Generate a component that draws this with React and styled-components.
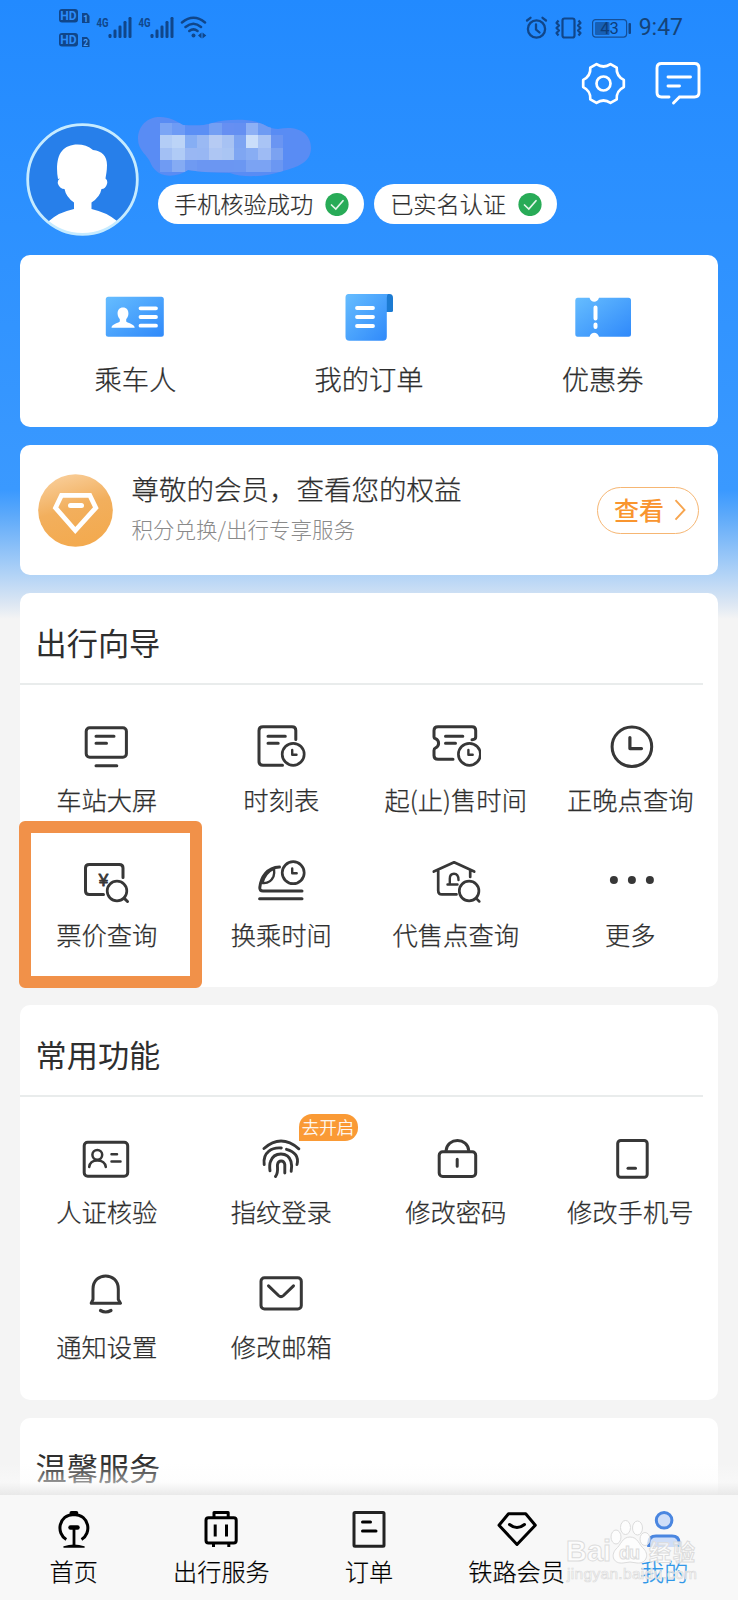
import styled, { createGlobalStyle, css } from "styled-components";

const GlobalStyle = createGlobalStyle`
    *, *::after {
        box-sizing: border-box;
    }
    body {
        margin: 0;
        background-color: #f4f4f4;
        font-family: "Noto Sans CJK SC", "Noto Sans", sans-serif;
        color: #2e2e2e;
    }
    svg {
        display: block;
        flex-shrink: 0;
    }
`

const Page = styled.div`
    display: flex;
    flex-direction: column;
    width: 738px;
    height: 1600px;
    overflow: hidden;
    background: linear-gradient(#228aff 0, #3a99ff 490px, #5ca9fa 515px, #b4d4f6 576px, #dbe6f3 603px, #f4f4f4 619px);
`

const Content = styled.main`
    position: relative;
    display: flex;
    flex-direction: column;
    height: 1495px;
    overflow: hidden;
`

const BottomFade = styled.div`
    position: absolute;
    left: 0;
    right: 0;
    bottom: 0;
    height: 32px;
    background: linear-gradient(rgba(255, 255, 255, 0), rgba(251, 251, 251, 0.5) 60%, rgba(232, 232, 232, 0.95));
`

const StatusBar = styled.div`
    display: flex;
    flex-shrink: 0;
    justify-content: space-between;
    align-items: center;
    height: 55px;
    padding: 0 55px 0 58px;
    color: #10468a;
`

const StatusGroup = styled.div`
    display: flex;
    align-items: center;
    height: 100%;
`

const Clock = styled.span`
    margin-left: 7px;
    font: 400 23px/30px Roboto, sans-serif;
    color: #154377;
`

const Toolbar = styled.div`
    display: flex;
    flex-shrink: 0;
    justify-content: flex-end;
    gap: 28px;
    height: 62px;
    padding: 6px 37px 0 0;
`

const Profile = styled.section`
    display: flex;
    flex-shrink: 0;
    height: 138px;
    padding-left: 26px;
`

const Avatar = styled.svg`
    margin-top: 6px;
`

const ProfileInfo = styled.div`
    margin-left: -1px;
`

const Pills = styled.div`
    display: flex;
    gap: 10px;
    margin: 7px 0 0 20px;
`

const Pill = styled.span`
    display: flex;
    align-items: center;
    gap: 12px;
    height: 40px;
    padding: 0 15px 0 16px;
    border-radius: 20px;
    background-color: #fff;
    font-size: 23.2px;
    font-weight: 300;
    line-height: 40px;
    white-space: nowrap;
    -webkit-text-stroke: 0.2px currentColor;
`

const PillText = styled.span`
    margin-top: -2px;
`

const Cards = styled.div`
    display: flex;
    flex-direction: column;
    gap: 18px;
    padding: 0 20px;
`

const Card = styled.section`
    flex-shrink: 0;
    height: ${props => props.$height}px;
    border-radius: 10px;
    background-color: #fff;
`

const Shortcuts = styled.div`
    display: grid;
    grid-template-columns: repeat(3, 1fr);
    margin: 0 -1.5px;
    padding-top: 37px;
`

const Shortcut = styled.div`
    display: flex;
    flex-direction: column;
    align-items: center;
    gap: 18px;
    font-size: 27.3px;
    font-weight: 300;
    line-height: 36px;
    -webkit-text-stroke: 0.25px currentColor;
`

const Member = styled.div`
    display: flex;
    align-items: center;
    height: 100%;
    padding: 0 19px 0 18px;
`

const MemberText = styled.div`
    flex: 1;
    margin: -4px 0 0 18.5px;
    white-space: nowrap;
`

const MemberTitle = styled.div`
    font-size: 27.5px;
    font-weight: 300;
    line-height: 40px;
    -webkit-text-stroke: 0.25px currentColor;
`

const MemberNote = styled.div`
    font-size: 21.5px;
    font-weight: 300;
    line-height: 41px;
    color: #8a8a8a;
`

const ViewButton = styled.button`
    display: flex;
    align-items: center;
    gap: 10px;
    width: 102px;
    height: 47px;
    padding: 0 0 2px 16px;
    border: 1.5px solid #f6b673;
    border-radius: 24px;
    background: none;
    font: 500 25px/40px "Noto Sans CJK SC", sans-serif;
    color: #f9952f;
    white-space: nowrap;
`

const SectionTitle = styled.h2`
    height: 92px;
    margin: 0 15px 0 0;
    padding: 5px 0 0 15.5px;
    border-bottom: 2px solid #e9ecec;
    font-size: 31.2px;
    font-weight: 400;
    line-height: 88px;
`

const Tiles = styled.div`
    display: grid;
    grid-template-columns: repeat(4, 1fr);
    grid-auto-rows: 135px;
`

const Tile = styled.div`
    position: relative;
    display: flex;
    flex-direction: column;
    align-items: center;
    gap: 12px;
    padding-top: 36px;
    font-size: 25.3px;
    font-weight: 300;
    line-height: 32px;
    white-space: nowrap;
    -webkit-text-stroke: 0.25px currentColor;
    ${props => props.$marked && css`
        &::after {
            content: "";
            position: absolute;
            left: -1px;
            top: 1px;
            width: 183px;
            height: 167px;
            border: 12px solid #f19149;
            border-radius: 6px;
        }
    `}
`

const TileLabel = styled.span`
    margin-left: -1px;
`

const Badge = styled.span`
    position: absolute;
    left: 104px;
    top: 17px;
    width: 59px;
    height: 27px;
    border-radius: 13px 13px 13px 0;
    background-color: #fa9a35;
    color: #fff;
    font-size: 17.5px;
    line-height: 25px;
    text-align: center;
`

const TabBar = styled.nav`
    position: relative;
    display: grid;
    grid-template-columns: repeat(5, 1fr);
    height: 105px;
    background-color: #f8f8f8;
`

const Tab = styled.div`
    display: flex;
    flex-direction: column;
    align-items: center;
    gap: 6px;
    padding-top: 15px;
    font-size: 24.2px;
    font-weight: 300;
    line-height: 30px;
    color: ${props => props.$active ? "#2f97e8" : "#000"};
    -webkit-text-stroke: 0.2px currentColor;
`

const Watermark = styled.svg`
    position: absolute;
    left: 562px;
    top: 20px;
`

const LineSvg = styled.svg`
    fill: none;
    stroke: ${props => props.$color || "#373737"};
    stroke-width: 3;
    stroke-linecap: round;
    stroke-linejoin: round;
`

const Gap = styled.span`
    width: ${props => props.$width}px;
`

/* ---------- header icons ---------- */

const HdIcon = () => (
    <svg width="32" height="40" viewBox="0 0 32 40" fontFamily="Roboto" fontWeight="700">
        {[0, 24].map((y, i) => (
            <g key={y}>
                <rect x="1" y={y + 1} width="19" height="13.5" rx="3" fill="#10468a"/>
                <text x="10.5" y={y + 12} fontSize="12" textAnchor="middle" fill="#2c8dfb">HD</text>
                <path d={`M24 ${y + 5}h5l2.500 3v7h-7.500z`} fill="#10468a"/>
                <text x="27.700" y={y + 13.6} fontSize="8.500" textAnchor="middle" fill="#4ba0ff">{i + 1}</text>
            </g>
        ))}
    </svg>
)

const SignalIcon = () => (
    <svg width="42" height="24" viewBox="0 0 42 24" fill="currentColor">
        <text x="6.500" y="10.500" fontSize="12.500" fontWeight="700" fontFamily="Roboto" textAnchor="middle" textLength="12" lengthAdjust="spacingAndGlyphs">4G</text>
        {[4, 8.5, 12.5, 17, 21].map((h, i) => (
            <rect key={h} x={12.5 + i * 5} y={22 - h} width="3" height={h} rx="1.200"/>
        ))}
    </svg>
)

const WifiIcon = () => (
    <svg width="27" height="24" viewBox="0 0 27 24" fill="none" stroke="currentColor" strokeWidth="2.500" strokeLinecap="round">
        <path d="M2 6.500Q13.500-3 25 6.500M5.500 11Q13.500 4.500 21 11M9.300 15Q13.500 11.800 17.500 15"/>
        <circle cx="13.500" cy="19.500" r="2" fill="currentColor" stroke="none"/>
        <path d="M21.500 16.500v6l-3.500-3zM22.500 16.500v6l3.800-3z" fill="currentColor" stroke="none"/>
    </svg>
)

const AlarmIcon = () => (
    <svg width="23" height="24" viewBox="0 0 23 24" fill="none" stroke="currentColor" strokeWidth="2.300" strokeLinecap="round">
        <circle cx="11.500" cy="13" r="8.600"/>
        <path d="M11 8.500v5l3.500 3M2 4.500L5.500 1.800M21 4.500L17.500 1.800"/>
    </svg>
)

const VibrateIcon = () => (
    <svg width="29" height="24" viewBox="0 0 29 24" fill="none" stroke="currentColor" strokeWidth="2.200" strokeLinejoin="round">
        <rect x="8.500" y="2.500" width="12" height="19" rx="2"/>
        <path d="M4.500 4.500L2.500 7l2.500 2.500L2.500 12l2.500 2.500-2.500 2.500 2 2.500M24.500 4.500l2 2.500L24 9.500l2.500 2.500-2.500 2.500 2.500 2.500-2 2.500"/>
    </svg>
)

const BatteryIcon = () => (
    <svg width="41" height="24" viewBox="0 0 41 24">
        <rect x="1.600" y="3.600" width="34" height="17.500" rx="3" fill="none" stroke="#154f98" strokeWidth="1.200"/>
        <rect x="4" y="6" width="14.500" height="13" rx="1" fill="#175fb5"/>
        <rect x="37.500" y="7" width="2.500" height="11" rx="1" fill="#10468a"/>
        <text x="18.500" y="18" fontSize="16.500" fontFamily="Roboto" textAnchor="middle" fill="#0d3d7a">43</text>
    </svg>
)

function gearPath(c, tip, dip) {
    const at = (r, deg) => {
        const a = deg * Math.PI / 180
        return `${(c + r * Math.cos(a)).toFixed(1)} ${(c - r * Math.sin(a)).toFixed(1)}`
    }
    let d = `M${at(tip, -10)}`
    for (let k = 0; k < 6; k++) {
        d += `L${at(tip, k * 60 + 10)}Q${at(dip, k * 60 + 30)} ${at(tip, k * 60 + 50)}`
    }
    return d + "Z"
}

const GearIcon = () => (
    <svg width="46" height="46" viewBox="0 0 46 46" fill="none" stroke="#fff" strokeWidth="2.700" strokeLinejoin="round">
        <path d={gearPath(22.5, 20.6, 14.6)}/>
        <circle cx="22.500" cy="22.500" r="7"/>
    </svg>
)

const MessageIcon = () => (
    <svg width="46" height="46" viewBox="0 0 46 46" fill="none" stroke="#fff" strokeWidth="2.900" strokeLinecap="round">
        <path d="M14 36H6.500Q2 36 2 31.500V7Q2 2.500 6.500 2.500H39.500Q44 2.500 44 7V31.500Q44 36 39.500 36H24.500L18.500 42"/>
        <path d="M13 16H35.500M13 25H24.500"/>
    </svg>
)

const AvatarIcon = () => (
    <Avatar width="113" height="113" viewBox="0 0 113 113">
        <clipPath id="avatarClip"><circle cx="56.500" cy="56.500" r="54.500"/></clipPath>
        <circle cx="56.500" cy="56.500" r="54.800" fill="#277fea"/>
        <path clipPath="url(#avatarClip)" fill="#fff" d="M32 56C30 46 31 33 36 28C42 20 58 19 67 27C76 28 81 33 81 42C81 48 80 52 79.500 55.500Q82 57 81 61Q79.500 66 75.500 66Q74 74 65.500 79.500V86Q80 89 91 98L96 113H17L23 98Q33 89 48 86V79.500Q40 74 38.500 66Q34 66 32 61Q31 57 34 55.500Z"/>
        <circle cx="56.500" cy="56.500" r="54.800" fill="none" stroke="#c6ebff" strokeWidth="2.800"/>
    </Avatar>
)

const mosaic = [
    ["#7ba5f5", "#6e9bf5", "#5b8ff5", "#5b8ff5", "#749ff3", "#668ff2", "#648ff2", "#8db0f5", "#6e9bf3", null],
    ["#b3cdf6", "#bcd4f7", "#86aef4", "#9ab9f3", "#b6cbf3", "#a7c2f3", "#7da4f2", "#cadefa", "#a9c4f5", "#6a95f2"],
    ["#a3c0f4", "#b0cbf6", "#99b7f3", "#98b7f3", "#aec6f3", "#aac5f3", "#7fa6f2", "#88adf3", "#9ebbf4", "#7ba2f1"],
    ["#6f9bf3", "#85abf3", "#6f9af2", "#6b96f2", "#6b96f2", "#6b96f2", "#6b97f2", "#7ba3f3", "#7ba3f3", "#6b97f2"],
]

// the user name is hidden under a pixelated smear
const HiddenName = () => (
    <svg width="173" height="60" viewBox="0 0 173 60">
        <clipPath id="smear">
            <path d="M0 22C0 8 10 0 22 0C32 0 38 4 45 8C56 9 66 9 74 6C88 2 108 2 119 5C128 8 132 12 140 12C160 8 173 16 173 31C173 45 160 50 145 54C128 60 105 61 92 56C76 56 62 55 50 53C38 61 20 62 13 47C10 38 0 34 0 22Z"/>
        </clipPath>
        <g clipPath="url(#smear)" shapeRendering="crispEdges">
            <rect width="173" height="60" fill="#598cf4"/>
            {mosaic.map((row, y) => row.map((color, x) => color &&
                <rect key={`${x}-${y}`} x={22 + x * 12.3} y={6 + y * 12.3} width="12.500" height="12.500" fill={color}/>
            ))}
        </g>
    </svg>
)

const CheckIcon = () => (
    <svg width="24" height="24" viewBox="0 0 24 24">
        <circle cx="12" cy="12.500" r="11.600" fill="#28ab57"/>
        <path d="M6.500 13l4.300 4 7.200-8.300" fill="none" stroke="#e4f6ea" strokeWidth="1.700" strokeLinecap="round"/>
    </svg>
)

/* ---------- card icons ---------- */

const BlueGradient = ({ id }) => (
    <linearGradient id={id} x1="0" y1="0" x2="1" y2="1">
        <stop offset="0" stopColor="#66bdff"/>
        <stop offset="1" stopColor="#2f89fa"/>
    </linearGradient>
)

const PassengerIcon = () => (
    <svg width="60" height="50" viewBox="0 0 60 50">
        <BlueGradient id="passenger"/>
        <rect x="0.800" y="4.700" width="58" height="40" rx="2.500" fill="url(#passenger)"/>
        <path fill="#fff" d="M18 15.500c3.600 0 5.600 2.500 5.400 6.500-.2 2.500-1.200 4-2.200 5v2.500c2 2 8.500 2.500 8.500 6.200H6.500c0-3.700 6.300-4.200 8.300-6.200V27c-1-1-2-2.500-2.200-5-.2-4 1.800-6.500 5.400-6.500z"/>
        <path d="M35.500 16.300h15.500M35.500 25h15.500M35.500 33.700h15.500" stroke="#fff" strokeWidth="3.800" strokeLinecap="round"/>
    </svg>
)

const OrdersIcon = () => (
    <svg width="60" height="50" viewBox="0 0 60 50">
        <BlueGradient id="orders"/>
        <path d="M46 2h4.500Q54 2 54 6v12.500q0 1.500-1.500 1.500H46z" fill="#1c7bd2"/>
        <path d="M9.500 2h39.500Q47.800 3 47.800 6v38.500q0 4.300-4 4.300H10.500q-4 0-4-4V5.500Q6.500 2 9.500 2z" fill="url(#orders)"/>
        <path d="M18 16h16M18 25h16M18 34h16" stroke="#fff" strokeWidth="3.800" strokeLinecap="round"/>
    </svg>
)

const CouponIcon = () => (
    <svg width="60" height="50" viewBox="0 0 60 50">
        <BlueGradient id="coupon"/>
        <path d="M4.500 5.700h12c1.500 5.500 8 5.500 9.500 0h29.500q2.500 0 2.500 2.500v34q0 2.500-2.500 2.500H26c-1.500-5.200-8-5.200-9.500 0h-12Q2.300 44.700 2.300 42V8.200q0-2.500 2.200-2.500z" fill="url(#coupon)"/>
        <path d="M22.500 15.500v11M22.500 32.500v2.500" stroke="#fff" strokeWidth="4" strokeLinecap="round"/>
    </svg>
)

const MemberIcon = () => (
    <svg width="75" height="73" viewBox="0 0 75 73">
        <linearGradient id="member" x1="0.200" y1="0" x2="0.500" y2="1">
            <stop offset="0" stopColor="#f9cf9c"/>
            <stop offset="0.500" stopColor="#f2af5d"/>
            <stop offset="1" stopColor="#f3aa4f"/>
        </linearGradient>
        <ellipse cx="37.500" cy="36.500" rx="37.300" ry="36.200" fill="url(#member)"/>
        <path d="M23.500 21.300H51.800L57.800 33.800L37.300 56.500L17.500 33.800Z" fill="none" stroke="#fff" strokeWidth="4.800"/>
        <path d="M32.500 31.500h11" stroke="#fff" strokeWidth="5" strokeLinecap="round"/>
    </svg>
)

const Chevron = () => (
    <svg width="12" height="24" viewBox="0 0 12 24" fill="none" stroke="#f7a54f" strokeWidth="1.900">
        <path d="M1.500 3.200l9 9.700-9 9.700"/>
    </svg>
)

/* ---------- tile icons, all on a 50x50 grid ---------- */

const icons = {
    screen: <>
        <rect x="4.200" y="6.700" width="40.200" height="29.600" rx="3.500"/>
        <path d="M14 15.200h18M14 22.300h10.500M14 44.700h20.800"/>
    </>,
    timetable: <>
        <path d="M38.800 18.500V9.500Q38.800 5.700 35 5.700H6Q2 5.700 2 9.500V40.500Q2 44.300 6 44.300H25.500"/>
        <path d="M11 15.200h17.300M11 22.300h10.200"/>
        <circle cx="36.200" cy="33.300" r="11" strokeWidth="2.700"/>
        <path d="M35.200 29v4.700h4.300" strokeWidth="2.400"/>
    </>,
    saleTime: <>
        <path d="M41 18.800Q44.700 18.500 44.700 16V9.500Q44.700 5.700 41 5.700H7Q3 5.700 3 9.500V15.500Q3 17.300 4.500 17.600Q7.600 19 7.600 22.300Q7.600 25.500 4.500 27Q3 27.500 3 29.500V34.500Q3 38.300 7 38.300H22"/>
        <path d="M14.500 15.200h17.300M14.500 22.300h10"/>
        <circle cx="38.400" cy="33.300" r="11" strokeWidth="2.700"/>
        <path d="M37.400 29v4.700h4.300" strokeWidth="2.400"/>
    </>,
    clock: <>
        <circle cx="25.900" cy="25.700" r="19.800"/>
        <path d="M23.900 16.500V27.600H35.500" strokeWidth="3.200"/>
    </>,
    fare: <>
        <path d="M41 21.500V12Q41 8.600 37.300 8.600H7.300Q3.500 8.600 3.500 12V35Q3.500 38.600 7.300 38.600H21.500"/>
        <circle cx="35" cy="35" r="9.800" strokeWidth="2.700"/>
        <path d="M42 42.200l3.500 3.300"/>
        <text x="21.400" y="29.500" fontSize="17" fontFamily="Liberation Sans" textAnchor="middle" fill="#373737" strokeWidth="0.900">¥</text>
    </>,
    transfer: <>
        <path d="M22.500 11C10 11.500 4 21 2.800 31.500Q2.500 35 6 35H45M2.600 42.700H45"/>
        <path d="M5.500 27C10 27.500 14 26 16.500 20.500C17.500 18 17.300 15 17 12.500C11 15.500 7 20 5.500 27Z" strokeWidth="2.400"/>
        <circle cx="36.200" cy="16.700" r="11" strokeWidth="2.700"/>
        <path d="M35.200 12.500v4.700h4.500" strokeWidth="2.400"/>
    </>,
    agency: <>
        <path d="M2.800 15.600L23.100 6.300L43.200 15.600M7.200 15V34.500Q7.200 38.400 11 38.400H25.500M39.200 15V21" strokeWidth="2.700"/>
        <path d="M16.500 28.500H26.500M18.800 28V22.500Q18.800 17.700 23 17.700Q27.500 17.700 27.500 24" strokeWidth="2.400"/>
        <circle cx="38.100" cy="35" r="9.800" strokeWidth="2.700"/>
        <path d="M45 42.200l3.300 3.300" strokeWidth="2.500"/>
    </>,
    more: <g fill="#373737" stroke="none">
        <circle cx="7.900" cy="24" r="4"/>
        <circle cx="25.900" cy="24" r="4"/>
        <circle cx="43.900" cy="24" r="4"/>
    </g>,
    idCard: <>
        <rect x="2.200" y="9.200" width="43.500" height="34" rx="3.500"/>
        <g strokeWidth="2.500">
            <circle cx="15.300" cy="21.800" r="4.900"/>
            <path d="M7.200 34Q8 27.500 15.300 27.500Q22.800 27.500 23.800 34M29.500 21.300h5.500M29.500 28.500h9"/>
        </g>
    </>,
    fingerprint: <g strokeWidth="2.900">
        <path d="M7 15.500Q24 .5 41.800 15.800"/>
        <path d="M7.200 31.500C5.500 19 15 14.200 24.300 15M29.500 16.300C38 18.500 42 24 40 31.500"/>
        <path d="M13 37.800C12.500 34 12.500 31 13.500 28.500C17 18.500 31 18.500 34 28.500C35 32 34.800 35 34.200 38.300"/>
        <path d="M18.500 43.500C22 39 20 34 20.500 31.500C21.500 26.800 27 27 27.800 31.500V40"/>
    </g>,
    lock: <>
        <rect x="8.200" y="18.800" width="36.500" height="24.700" rx="3.500"/>
        <path d="M15 18C16 4 37 4 37.800 18M26.200 26.200V33.300"/>
    </>,
    phone: <>
        <rect x="11.700" y="7.500" width="29.500" height="36.800" rx="3"/>
        <path d="M22 35.300h7.500"/>
    </>,
    bell: <>
        <path d="M9.200 35.200L11 31.500V21C11 3.500 36.300 3.500 36.300 21V31.500L38.500 35.200Z"/>
        <path d="M18.500 42.500Q23.700 45.500 29 42.500" strokeWidth="3.200"/>
    </>,
    mail: <>
        <rect x="4" y="9.800" width="40.300" height="31.200" rx="3.500"/>
        <path d="M11.500 17.800L21.500 27.500Q24 29.800 26.500 27.500L36.500 17.800"/>
    </>,
}

const guide = [
    { icon: "screen", label: "车站大屏" },
    { icon: "timetable", label: "时刻表" },
    { icon: "saleTime", label: "起(止)售时间" },
    { icon: "clock", label: "正晚点查询" },
    { icon: "fare", label: "票价查询", marked: true },
    { icon: "transfer", label: "换乘时间" },
    { icon: "agency", label: "代售点查询" },
    { icon: "more", label: "更多" },
]

const common = [
    { icon: "idCard", label: "人证核验" },
    { icon: "fingerprint", label: "指纹登录", badge: "去开启" },
    { icon: "lock", label: "修改密码" },
    { icon: "phone", label: "修改手机号" },
    { icon: "bell", label: "通知设置" },
    { icon: "mail", label: "修改邮箱" },
]

const tabs = [
    {
        label: "首页",
        icon: <>
            <path d="M14.300 29.500C4 23.500 6 5 21.900 4.500C37.800 5 39.800 23.500 29.500 29.500" strokeLinecap="butt"/>
            <path d="M19.500 3h4.800" strokeWidth="4"/>
            <path d="M18.500 17.500h7" strokeWidth="4.500"/>
            <path d="M22 19V35" strokeWidth="2.800"/>
            <path d="M12 37Q22 33.500 32 37Z" strokeWidth="1.500" fill="#000"/>
        </>,
    },
    {
        label: "出行服务",
        icon: <>
            <rect x="7" y="7.700" width="30.200" height="25.300" rx="2.500"/>
            <path d="M15 7V2.500H29.200V7M16.200 14.500v12M27.500 14.500v12M14.500 34v3M29.800 34v3" strokeLinecap="butt"/>
        </>,
    },
    {
        label: "订单",
        icon: <>
            <rect x="7" y="2.500" width="30" height="33.800" rx="1" stroke="#222"/>
            <path d="M15.500 12h8M15.500 21h13.500"/>
        </>,
    },
    {
        label: "铁路会员",
        icon: <>
            <path d="M13.500 3.800H30.700L40.300 15.300L22 34.500L4 15.300Z"/>
            <path d="M14.500 14.500Q22 20.500 29.500 14.500"/>
        </>,
    },
    {
        label: "我的",
        active: true,
        icon: <g fill="#cfdef8">
            <circle cx="22.100" cy="10.300" r="7.800"/>
            <path d="M6.700 37V33Q7 26 14 26H30Q37 26 37.200 33V37" strokeLinecap="butt"/>
        </g>,
    },
]

const Section = ({ title, items, height }) => (
    <Card $height={height}>
        <SectionTitle>{title}</SectionTitle>
        <Tiles>
            {items.map(item => (
                <Tile key={item.label} $marked={item.marked}>
                    <LineSvg width="50" height="50" viewBox="0 0 50 50">{icons[item.icon]}</LineSvg>
                    <TileLabel>{item.label}</TileLabel>
                    {item.badge && <Badge>{item.badge}</Badge>}
                </Tile>
            ))}
        </Tiles>
    </Card>
)

export default function App() {
    return (
        <Page>
            <GlobalStyle/>
            <Content>
                <StatusBar>
                    <StatusGroup>
                        <HdIcon/>
                        <Gap $width={6}/>
                        <SignalIcon/>
                        <SignalIcon/>
                        <Gap $width={-2}/>
                        <WifiIcon/>
                    </StatusGroup>
                    <StatusGroup>
                        <AlarmIcon/>
                        <Gap $width={6}/>
                        <VibrateIcon/>
                        <Gap $width={8}/>
                        <BatteryIcon/>
                        <Clock>9:47</Clock>
                    </StatusGroup>
                </StatusBar>
                <Toolbar>
                    <GearIcon/>
                    <MessageIcon/>
                </Toolbar>
                <Profile>
                    <AvatarIcon/>
                    <ProfileInfo>
                        <HiddenName/>
                        <Pills>
                            <Pill><PillText>手机核验成功</PillText><CheckIcon/></Pill>
                            <Pill><PillText>已实名认证</PillText><CheckIcon/></Pill>
                        </Pills>
                    </ProfileInfo>
                </Profile>
                <Cards>
                    <Card $height={172}>
                        <Shortcuts>
                            <Shortcut><PassengerIcon/>乘车人</Shortcut>
                            <Shortcut><OrdersIcon/>我的订单</Shortcut>
                            <Shortcut><CouponIcon/>优惠券</Shortcut>
                        </Shortcuts>
                    </Card>
                    <Card $height={130}>
                        <Member>
                            <MemberIcon/>
                            <MemberText>
                                <MemberTitle>尊敬的会员，查看您的权益</MemberTitle>
                                <MemberNote>积分兑换/出行专享服务</MemberNote>
                            </MemberText>
                            <ViewButton>查看<Chevron/></ViewButton>
                        </Member>
                    </Card>
                    <Section title="出行向导" items={guide} height={394}/>
                    <Section title="常用功能" items={common} height={395}/>
                    <Section title="温馨服务" items={[]} height={394}/>
                </Cards>
                <BottomFade/>
            </Content>
            <TabBar>
                {tabs.map(tab => (
                    <Tab key={tab.label} $active={tab.active}>
                        <LineSvg $color={tab.active ? "#4a86e0" : "#000"} width="44" height="40" viewBox="0 0 44 40">
                            {tab.icon}
                        </LineSvg>
                        {tab.label}
                    </Tab>
                ))}
                <Watermark width="140" height="72" viewBox="0 0 140 72" fill="#fff" fillOpacity="0.700" stroke="#dcdcdc" strokeWidth="1" fontFamily="Liberation Sans" fontWeight="700">
                    <text x="4" y="46" fontSize="30" textLength="45" lengthAdjust="spacingAndGlyphs">Bai</text>
                    <ellipse cx="54" cy="22" rx="5" ry="7"/>
                    <ellipse cx="63.500" cy="12.500" rx="5" ry="7"/>
                    <ellipse cx="75.500" cy="13" rx="5" ry="7"/>
                    <ellipse cx="83" cy="24" rx="5" ry="6.500"/>
                    <path d="M68 22C76 22 77 30 82 34C88 41 83 49 75 48Q68 46 61 48C52 49 48 41 54 34C59 30 60 22 68 22Z"/>
                    <text x="57" y="44" fontSize="18" textLength="21" fill="none">du</text>
                    <text x="87" y="45" fontSize="22" textLength="46" fontFamily="Noto Sans CJK SC">经验</text>
                    <text x="5" y="64" fontSize="15.500" fontWeight="400" textLength="130" strokeWidth="0.700">jingyan.baidu.com</text>
                </Watermark>
            </TabBar>
        </Page>
    )
}
